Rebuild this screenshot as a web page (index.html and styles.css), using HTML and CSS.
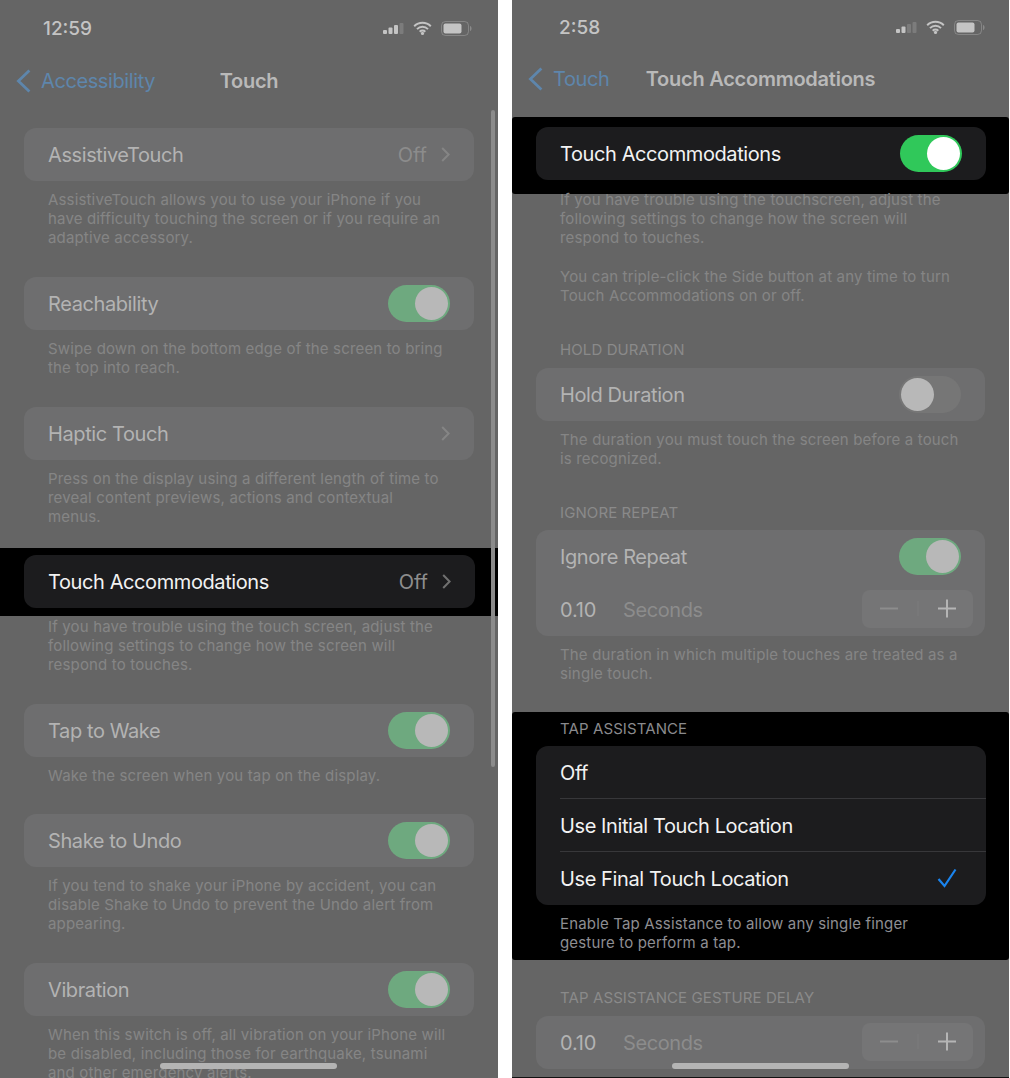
FILE: index.html
```html
<!DOCTYPE html>
<html lang="en">
<head>
    <meta charset="UTF-8">
    <title>Touch settings</title>
    <link rel="stylesheet" href="styles.css">
</head>
<body>
    <svg class="defs" width="0" height="0">
        <symbol id="chev" viewBox="0 0 9 15"><path d="M1.2 1l6.4 6.5-6.4 6.5" fill="none" stroke="currentColor" stroke-width="2"/></symbol>
        <symbol id="back" viewBox="0 0 15 24"><path d="M13.4 1.5L2.4 12l11 10.5" fill="none" stroke="currentColor" stroke-width="2.8"/></symbol>
        <symbol id="wifi" viewBox="0 0 19 14">
            <path d="M1.2 5.2a11.8 11.8 0 0 1 16.6 0M4 8.1a7.9 7.9 0 0 1 11 0M6.7 10.7a4 4 0 0 1 5.6 0" fill="none" stroke="currentColor" stroke-width="2"/>
            <circle cx="9.5" cy="12.4" r="1.6" fill="currentColor"/>
        </symbol>
        <symbol id="batt" viewBox="0 0 31 15">
            <rect x="0.5" y="0.5" width="27" height="14" rx="4" fill="none" stroke="currentColor" stroke-opacity=".35"/>
            <rect x="2.5" y="2.5" width="18" height="10" rx="2" fill="currentColor"/>
            <path d="M29 5v5c1-.3 1.6-1.3 1.6-2.5S30 5.300 29 5z" fill="currentColor" fill-opacity=".4"/>
        </symbol>
    </svg>

    <div class="page">
        <!-- left phone -->
        <div class="phone">
            <div class="status">
                <span class="time">12:59</span>
                <div class="status-icons">
                    <svg class="signal" viewBox="0 0 21 11"><rect x="0" y="7" width="4" height="4" rx="1"/><rect x="5.500" y="4.500" width="4" height="6.500" rx="1"/><rect x="11" y="2" width="4" height="9" rx="1"/><rect x="16.500" y="0" width="4" height="11" rx="1" opacity=".25"/></svg>
                    <svg class="wifi"><use href="#wifi"/></svg>
                    <svg class="batt"><use href="#batt"/></svg>
                </div>
            </div>
            <div class="nav">
                <div class="back"><svg class="back-icon"><use href="#back"/></svg>Accessibility</div>
                <div class="nav-title">Touch</div>
            </div>

            <div class="list">
                <div class="card"><span class="label">AssistiveTouch</span><span class="value">Off</span><svg class="chev"><use href="#chev"/></svg></div>
                <p class="note">AssistiveTouch allows you to use your iPhone if you<br>have difficulty touching the screen or if you require an<br>adaptive accessory.</p>

                <div class="card gap"><span class="label">Reachability</span><span class="toggle on"></span></div>
                <p class="note">Swipe down on the bottom edge of the screen to bring<br>the top into reach.</p>

                <div class="card gap"><span class="label">Haptic Touch</span><svg class="chev"><use href="#chev"/></svg></div>
                <p class="note">Press on the display using a different length of time to<br>reveal content previews, actions and contextual<br>menus.</p>

                <div class="band band-row">
                    <div class="card"><span class="label">Touch Accommodations</span><span class="value">Off</span><svg class="chev"><use href="#chev"/></svg></div>
                </div>
                <p class="note after-band">If you have trouble using the touch screen, adjust the<br>following settings to change how the screen will<br>respond to touches.</p>

                <div class="card gap"><span class="label">Tap to Wake</span><span class="toggle on"></span></div>
                <p class="note">Wake the screen when you tap on the display.</p>

                <div class="card gap"><span class="label">Shake to Undo</span><span class="toggle on"></span></div>
                <p class="note">If you tend to shake your iPhone by accident, you can<br>disable Shake to Undo to prevent the Undo alert from<br>appearing.</p>

                <div class="card gap"><span class="label">Vibration</span><span class="toggle on"></span></div>
                <p class="note">When this switch is off, all vibration on your iPhone will<br>be disabled, including those for earthquake, tsunami<br>and other emergency alerts.</p>
            </div>

            <div class="scrollbar"></div>
            <div class="home"></div>
        </div>

        <!-- right phone -->
        <div class="phone phone-right">
            <div class="status">
                <span class="time">2:58</span>
                <div class="status-icons">
                    <svg class="signal" viewBox="0 0 21 11"><rect x="0" y="7" width="4" height="4" rx="1"/><rect x="5.500" y="4.500" width="4" height="6.500" rx="1"/><rect x="11" y="2" width="4" height="9" rx="1" opacity=".25"/><rect x="16.500" y="0" width="4" height="11" rx="1" opacity=".25"/></svg>
                    <svg class="wifi"><use href="#wifi"/></svg>
                    <svg class="batt"><use href="#batt"/></svg>
                </div>
            </div>
            <div class="nav">
                <div class="back"><svg class="back-icon"><use href="#back"/></svg>Touch</div>
                <div class="nav-title">Touch Accommodations</div>
            </div>

            <div class="list">
                <div class="band band-top">
                    <div class="card"><span class="label">Touch Accommodations</span><span class="toggle on"></span></div>
                </div>
                <p class="note under-band">If you have trouble using the touchscreen, adjust the<br>following settings to change how the screen will<br>respond to touches.</p>
                <p class="note para">You can triple-click the Side button at any time to turn<br>Touch Accommodations on or off.</p>

                <div class="header head-hold">HOLD DURATION</div>
                <div class="card"><span class="label">Hold Duration</span><span class="toggle"></span></div>
                <p class="note">The duration you must touch the screen before a touch<br>is recognized.</p>

                <div class="header head-repeat">IGNORE REPEAT</div>
                <div class="card card-stack">
                    <div class="row"><span class="label">Ignore Repeat</span><span class="toggle on"></span></div>
                    <div class="row">
                        <span class="num">0.10</span><span class="unit">Seconds</span>
                        <div class="stepper"><svg viewBox="0 0 111 38"><path class="minus" d="M18 18.500h18"/><path class="mid" d="M56 11v15"/><path class="plus" d="M76 18.500h18M85 9.500v18"/></svg></div>
                    </div>
                </div>
                <p class="note">The duration in which multiple touches are treated as a<br>single touch.</p>

                <div class="band band-tap">
                    <div class="header">TAP ASSISTANCE</div>
                    <div class="card card-stack">
                        <div class="row line"><span class="label">Off</span></div>
                        <div class="row line"><span class="label">Use Initial Touch Location</span></div>
                        <div class="row"><span class="label">Use Final Touch Location</span><svg class="check" viewBox="0 0 20 20"><path d="M1.500 11l6 7L18.500 1.500" fill="none" stroke="currentColor" stroke-width="2.200"/></svg></div>
                    </div>
                    <p class="note">Enable Tap Assistance to allow any single finger<br>gesture to perform a tap.</p>
                </div>

                <div class="header head-delay">TAP ASSISTANCE GESTURE DELAY</div>
                <div class="card">
                    <span class="num">0.10</span><span class="unit">Seconds</span>
                    <div class="stepper"><svg viewBox="0 0 111 38"><path class="minus" d="M18 18.500h18"/><path class="mid" d="M56 11v15"/><path class="plus" d="M76 18.500h18M85 9.500v18"/></svg></div>
                </div>
            </div>

            <div class="home"></div>
        </div>
    </div>
</body>
</html>
```

FILE: styles.css
```css
body {
    margin: 0;
    background: white;
    font-family: Inter, "Liberation Sans", sans-serif;
}

.defs {
    position: absolute;
}

.page {
    display: flex;
    gap: 14px;
    width: 1010px;
    height: 1078px;
    overflow: hidden;
}

.phone {
    position: relative;
    flex: none;
    width: 498px;
    height: 1078px;
    overflow: hidden;
    background: #656565;
}

.phone-right {
    width: 497px;
    height: 1077px;
    border-bottom: 1px solid #111;
}

/* status bar */
.status {
    display: flex;
    align-items: center;
    justify-content: space-between;
    height: 56px;
    padding: 0 26px 0 43px;
    color: #c4c4c4;
}

.phone-right .status {
    height: 54px;
    padding: 0 24px 0 47px;
}

.time {
    font-size: 19px;
    font-weight: 500;
}

.status-icons {
    display: flex;
    align-items: center;
    gap: 9px;
}

.signal {
    width: 21px;
    height: 11px;
    fill: currentColor;
}

.wifi {
    width: 19px;
    height: 14px;
}

.batt {
    width: 31px;
    height: 15px;
}

/* nav */
.nav {
    display: grid;
    grid-template-columns: 1fr auto 1fr;
    align-items: center;
    height: 50px;
}

.back {
    display: flex;
    align-items: center;
    gap: 10px;
    padding-left: 16px;
    font-size: 20px;
    letter-spacing: -0.4px;
    color: #5e86ac;
}

.back-icon {
    width: 15px;
    height: 24px;
}

.nav-title {
    font-size: 20px;
    font-weight: 600;
    letter-spacing: -0.25px;
    color: #b9b9b9;
}

/* list */
.list {
    padding: 22px 24px 0;
}

.phone-right .list {
    padding-top: 13px;
}

.card {
    display: flex;
    align-items: center;
    height: 53px;
    padding: 0 24px;
    background: #6e6e6f;
    border-radius: 12px;
}

.gap {
    margin-top: 29.750px;
}

.label {
    flex: 1;
    padding-top: 1px;
    font-size: 20px;
    letter-spacing: -0.4px;
    color: #b3b3b3;
}

.value {
    margin-right: 14px;
    font-size: 20px;
    color: #8c8c8c;
}

.chev {
    width: 9px;
    height: 15px;
    color: #858585;
}

.note {
    margin: 0;
    padding: 9px 0 0 24px;
    font-size: 15px;
    line-height: 19px;
    letter-spacing: 0.16px;
    color: #858585;
}

.header {
    height: 18px;
    padding-left: 24px;
    font-size: 15px;
    line-height: 20px;
    letter-spacing: 0.1px;
    color: #8a8a8a;
}

.head-hold {
    margin-top: 35px;
    margin-bottom: 10px;
}

.head-repeat {
    margin-top: 35px;
    margin-bottom: 9px;
}

.head-delay {
    margin-top: 28px;
    margin-bottom: 10px;
}

.para {
    padding-top: 20px;
}

/* toggle */
.toggle {
    display: flex;
    flex: none;
    width: 62px;
    height: 37px;
    padding: 2px;
    box-sizing: border-box;
    background: #767676;
    border-radius: 19px;
}

.toggle::after {
    content: "";
    width: 33px;
    height: 33px;
    background: #b8b8b8;
    border-radius: 50%;
}

.toggle.on {
    justify-content: flex-end;
    background: #6ea97f;
}

/* highlighted parts keep full brightness */
.band {
    margin: 0 -24px;
    padding-left: 24px;
    padding-right: 23px;
    background: black;
    border-radius: 3px;
}

.band .card {
    background: #1c1c1e;
}

.band .label {
    color: #f2f2f2;
}

.band .value {
    color: #8e8e8e;
}

.band .chev {
    color: #707070;
}

.band .toggle.on {
    background: #30c85a;
}

.band .toggle.on::after {
    background: white;
}

.band .header {
    color: #8a8a8d;
}

.band .note {
    color: #8e8e92;
}

.band-row {
    margin-top: 22.750px;
    padding-top: 7px;
    padding-bottom: 8px;
    border-radius: 0;
}

.after-band {
    padding-top: 0.500px;
}

.band-top {
    padding-top: 10px;
    padding-bottom: 14px;
}

.under-band {
    margin-top: -13.500px;
}

.band-tap {
    margin-top: 29px;
    padding-top: 7px;
    padding-bottom: 8px;
}

.band-tap .header {
    margin-bottom: 9px;
}

/* multi row cards */
.card-stack {
    display: block;
    height: auto;
    padding: 0 0 0 24px;
}

.row {
    display: flex;
    align-items: center;
    height: 53px;
    padding-right: 24px;
    box-sizing: border-box;
}

.row.line {
    padding-top: 1px;
    border-bottom: 1px solid #37373a;
}

.num {
    width: 63px;
    padding-top: 1px;
    font-size: 20px;
    letter-spacing: -0.2px;
    color: #b3b3b3;
}

.unit {
    flex: 1;
    padding-top: 1px;
    font-size: 20px;
    letter-spacing: -0.4px;
    color: #8c8c8c;
}

.stepper {
    flex: none;
    width: 111px;
    height: 38px;
    margin-right: -12px;
    background: #757576;
    border-radius: 8px;
}

.stepper svg {
    display: block;
    width: 111px;
    height: 38px;
    fill: none;
    stroke-width: 2;
}

.minus {
    stroke: #8d8d8d;
}

.mid {
    stroke: #7d7d7d;
    stroke-width: 1;
}

.plus {
    stroke: #b5b5b5;
}

.check {
    width: 20px;
    height: 20px;
    margin-right: 5px;
    color: #1a84ee;
}

/* overlays */
.scrollbar {
    position: absolute;
    top: 110px;
    left: 491px;
    width: 4px;
    height: 657px;
    background: #8b8b8b;
    border-radius: 2px;
}

.home {
    position: absolute;
    top: 1063px;
    left: 160px;
    width: 177px;
    height: 6px;
    background: #b4b4b4;
    border-radius: 3px;
}
```
